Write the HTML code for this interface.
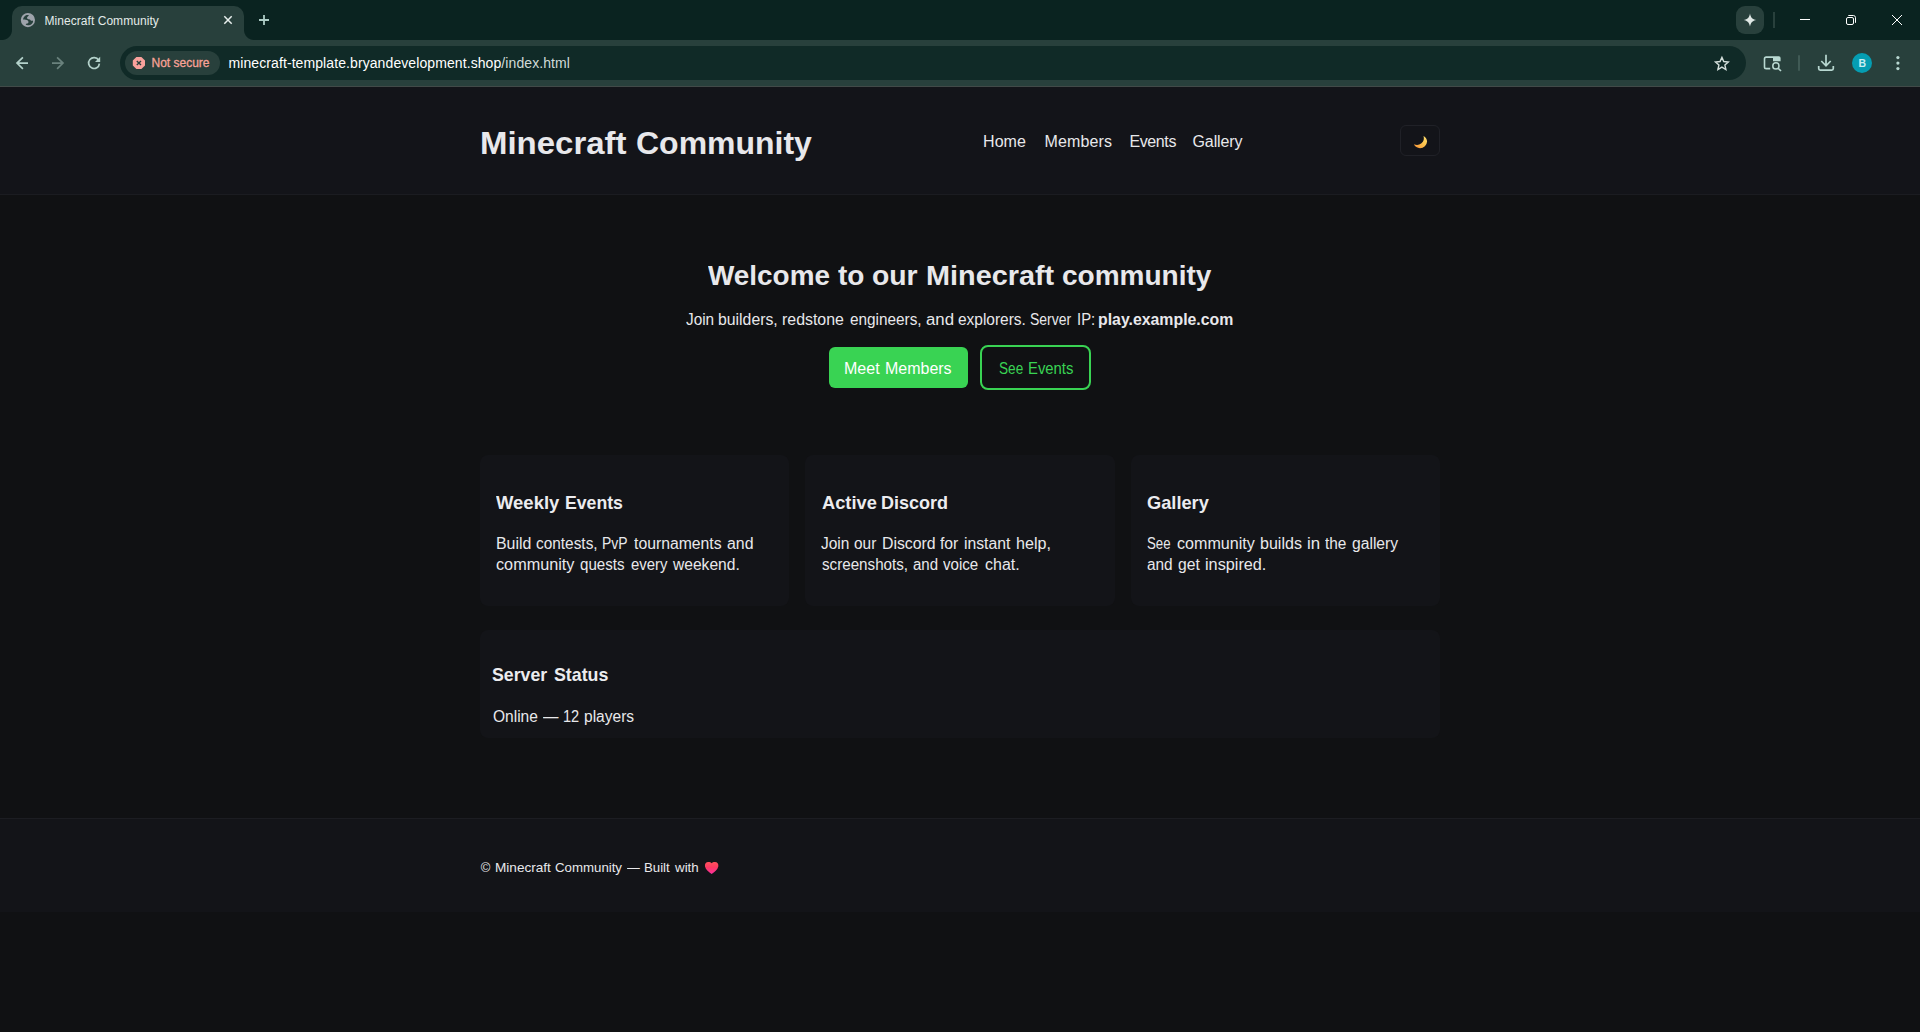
<!DOCTYPE html>
<html lang="en">
<head>
<meta charset="utf-8">
<title>Minecraft Community</title>
<style>
html,body{margin:0;padding:0}
body{width:1920px;height:1032px;overflow:hidden;position:relative;background:#101113;
  font-family:"Liberation Sans",sans-serif;color:#e8e8eb;-webkit-font-smoothing:antialiased}
.abs{position:absolute}
.t{position:absolute;white-space:pre;line-height:1;margin:0;padding:0}
/* ---------- browser chrome ---------- */
#tabstrip{left:0;top:0;width:1920px;height:40px;background:#0a2320}
#toolbar{left:0;top:40px;width:1920px;height:46px;background:#28403c}
#tbline{left:0;top:86px;width:1920px;height:1px;background:#414a48}
#tab{left:12px;top:6px;width:232px;height:34px;background:#28403c;border-radius:10px 10px 0 0}
#tabL{left:2px;top:30px;width:10px;height:10px;background:radial-gradient(circle at 0 0,rgba(40,64,60,0) 9.5px,#28403c 10.5px)}
#tabR{left:244px;top:30px;width:10px;height:10px;background:radial-gradient(circle at 100% 0,rgba(40,64,60,0) 9.5px,#28403c 10.5px)}
#omni{left:120px;top:46px;width:1626px;height:34px;border-radius:17px;background:#102a27}
#chip{left:125px;top:51px;width:95px;height:24px;border-radius:12px;background:#28403c}
#spark{left:1736px;top:6px;width:28px;height:28px;border-radius:9px;background:#28403c}
.sep{width:1px;background:#3b5450}
#avatar{left:1852px;top:53px;width:20px;height:20px;border-radius:50%;background:#059db2}
svg{position:absolute;overflow:visible}
/* ---------- page ---------- */
#hdr{left:0;top:87px;width:1920px;height:107px;background:#131419}
#hdrline{left:0;top:194px;width:1920px;height:1px;background:#1b1c21}
.card{position:absolute;background:#131418;border-radius:8px}
#footer{left:0;top:818px;width:1920px;height:94px;background:#131418;border-top:1px solid #1c1d22;box-sizing:border-box}
#toggle{display:block;left:1400px;top:125px;width:40px;height:31px;box-sizing:border-box;border:1px solid #202127;border-radius:6px}
#btn1{display:block;left:829px;top:347px;width:139px;height:41px;border-radius:6px;background:#39d353}
#btn2{display:block;left:980px;top:345px;width:111px;height:45px;border-radius:8px;border:2px solid #39d353;box-sizing:border-box}
h1,h2,h3,p,strong,a,button{margin:0;padding:0;font:inherit;color:inherit;text-decoration:none;background:none}
.ln{position:absolute;left:0;margin:0;padding:0;line-height:1;white-space:pre;height:0}
.ln span{position:absolute;top:0;transform-origin:0 50%;display:block}
.h3{font-size:18.72px;font-weight:700;color:#ececef}
.p{font-size:16px;color:#e6e6e9}
</style>
</head>
<body>
<!-- ================= browser chrome ================= -->
<div class="abs" id="tabstrip"></div>
<div class="abs" id="toolbar"></div>
<div class="abs" id="tbline"></div>
<div class="abs" id="tab"></div>
<div class="abs" id="tabL"></div>
<div class="abs" id="tabR"></div>
<div class="abs" id="omni"></div>
<div class="abs" id="chip"></div>
<div class="abs" id="spark"></div>
<div class="abs sep" style="left:1773px;top:12px;width:2px;height:16px;background:#28403c"></div>
<div class="abs sep" style="left:1798px;top:55px;width:2px;height:16px;background:#405a55;border-radius:1px"></div>
<div class="abs" id="avatar"></div>

<span class="t" id="tabtitle" style="left:44.5px;top:15px;font-size:12px;letter-spacing:.05px;color:#e3ebe9">Minecraft Community</span>
<span class="t" id="notsecure" style="left:151.5px;top:57px;font-size:12px;letter-spacing:0;color:#f8a296;-webkit-text-stroke:.3px #f8a296">Not secure</span>
<span class="t" id="url" style="left:228.5px;top:56.3px;font-size:14px;letter-spacing:.09px;color:#ffffff">minecraft-template.bryandevelopment.shop<span style="color:#d0dbd8">/index.html</span></span>
<span class="t" id="avB" style="left:1858.6px;top:58px;font-size:10.5px;font-weight:700;color:#c9eef2">B</span>

<!-- ================= page ================= -->
<header class="abs" id="hdr"></header>
<div class="abs" id="hdrline"></div>
<a class="t" id="nav1" style="left:983px;top:133.5px;font-size:16px;letter-spacing:.08px">Home</a>
<a class="t" id="nav2" style="left:1044.5px;top:133.5px;font-size:16px;letter-spacing:.12px">Members</a>
<a class="t" id="nav3" style="left:1129.5px;top:133.5px;font-size:16px;letter-spacing:-.4px">Events</a>
<a class="t" id="nav4" style="left:1192.5px;top:133.5px;font-size:16px;letter-spacing:-.1px">Gallery</a>
<button class="abs" id="toggle" aria-label="Toggle theme"></button>

<a class="abs" id="btn1"></a>
<a class="abs" id="btn2"></a>

<article class="card" id="c1" style="left:480px;top:454.5px;width:309.33px;height:151px"></article>
<article class="card" id="c2" style="left:805.33px;top:454.5px;width:309.33px;height:151px"></article>
<article class="card" id="c3" style="left:1130.67px;top:454.5px;width:309.33px;height:151px"></article>
<article class="card" id="c4" style="left:480px;top:630px;width:960px;height:108px"></article>





<footer class="abs" id="footer"></footer>

<!-- ================= page text (word-level positioned) ================= -->
<h1 class="ln" id="brand" style="top:126.6px;font-size:32px;font-weight:700;">
<span style="left:479.74px;transform:scaleX(1.0299)">Minecraft </span><span style="left:635.50px;transform:scaleX(0.9994)">Community</span>
</h1>
<h2 class="ln" id="h2" style="top:262px;font-size:28px;font-weight:700;">
<span style="left:708.10px;transform:scaleX(0.9963)">Welcome </span><span style="left:837.60px;transform:scaleX(0.9991)">to </span><span style="left:872.29px;transform:scaleX(1.0112)">our </span><span style="left:926.47px;transform:scaleX(1.0297)">Minecraft </span><span style="left:1061.90px;transform:scaleX(1.0001)">community</span>
</h2>
<p class="ln" id="lead" style="top:312px;font-size:16px;font-weight:400;">
<span style="left:686.25px;transform:scaleX(0.9577)">Join </span><span style="left:718.11px;transform:scaleX(0.9876)">builders, </span><span style="left:782.11px;transform:scaleX(0.9940)">redstone </span><span style="left:849.50px;transform:scaleX(0.9586)">engineers, </span><span style="left:925.90px;transform:scaleX(1.0505)">and </span><span style="left:957.70px;transform:scaleX(0.9665)">explorers. </span><span style="left:1029.90px;transform:scaleX(0.8745)">Server </span><span style="left:1077.37px;transform:scaleX(0.9289)">IP:</span>
</p>
<strong class="ln" id="leadb" style="top:312px;font-size:16px;font-weight:700;">
<span style="left:1098.21px;transform:scaleX(0.9902)">play.example.com</span>
</strong>
<a class="ln" id="b1t" style="top:360.8px;font-size:16px;font-weight:400;color:#ffffff">
<span style="left:844.30px;transform:scaleX(1.0021)">Meet </span><span style="left:885.40px;transform:scaleX(0.9988)">Members</span>
</a>
<a class="ln" id="b2t" style="top:360.8px;font-size:16px;font-weight:400;color:#39d353">
<span style="left:998.70px;transform:scaleX(0.8505)">See </span><span style="left:1027.87px;transform:scaleX(0.9287)">Events</span>
</a>
<h3 class="ln" id="c1h" style="top:494px;font-size:18.72px;font-weight:700;color:#ececef">
<span style="left:496.10px;transform:scaleX(0.9874)">Weekly </span><span style="left:565.26px;transform:scaleX(0.9444)">Events</span>
</h3>
<h3 class="ln" id="c2h" style="top:494px;font-size:18.72px;font-weight:700;color:#ececef">
<span style="left:821.60px;transform:scaleX(0.9760)">Active </span><span style="left:881.24px;transform:scaleX(0.9617)">Discord</span>
</h3>
<h3 class="ln" id="c3h" style="top:494px;font-size:18.72px;font-weight:700;color:#ececef">
<span style="left:1146.90px;transform:scaleX(0.9747)">Gallery</span>
</h3>
<h3 class="ln" id="c4h" style="top:666px;font-size:18.72px;font-weight:700;color:#ececef">
<span style="left:492.40px;transform:scaleX(0.9464)">Server </span><span style="left:553.80px;transform:scaleX(0.9514)">Status</span>
</h3>
<p class="ln" id="c1a" style="top:536px;font-size:16px;font-weight:400;">
<span style="left:495.61px;transform:scaleX(0.9947)">Build </span><span style="left:536.40px;transform:scaleX(0.9625)">contests, </span><span style="left:602.13px;transform:scaleX(0.8709)">PvP </span><span style="left:633.60px;transform:scaleX(0.9850)">tournaments </span><span style="left:727.00px;transform:scaleX(0.9924)">and</span>
</p>
<p class="ln" id="c1b" style="top:557px;font-size:16px;font-weight:400;">
<span style="left:496.20px;transform:scaleX(1.0136)">community </span><span style="left:580.40px;transform:scaleX(0.9440)">quests </span><span style="left:630.70px;transform:scaleX(0.9329)">every </span><span style="left:673.27px;transform:scaleX(0.9743)">weekend.</span>
</p>
<p class="ln" id="c2a" style="top:536px;font-size:16px;font-weight:400;">
<span style="left:821.30px;transform:scaleX(0.9665)">Join </span><span style="left:854.10px;transform:scaleX(0.9623)">our </span><span style="left:881.81px;transform:scaleX(0.9898)">Discord </span><span style="left:940.40px;transform:scaleX(0.9822)">for </span><span style="left:964.22px;transform:scaleX(0.9830)">instant </span><span style="left:1016.00px;transform:scaleX(1.0045)">help,</span>
</p>
<p class="ln" id="c2b" style="top:557px;font-size:16px;font-weight:400;">
<span style="left:821.60px;transform:scaleX(0.9483)">screenshots, </span><span style="left:913.00px;transform:scaleX(0.9381)">and </span><span style="left:943.00px;transform:scaleX(0.9425)">voice </span><span style="left:984.50px;transform:scaleX(0.9987)">chat.</span>
</p>
<p class="ln" id="c3a" style="top:536px;font-size:16px;font-weight:400;">
<span style="left:1147.00px;transform:scaleX(0.8260)">See </span><span style="left:1176.75px;transform:scaleX(1.0052)">community </span><span style="left:1260.00px;transform:scaleX(1.0023)">builds </span><span style="left:1306.95px;transform:scaleX(1.0517)">in </span><span style="left:1324.90px;transform:scaleX(0.9622)">the </span><span style="left:1352.20px;transform:scaleX(0.9781)">gallery</span>
</p>
<p class="ln" id="c3b" style="top:557px;font-size:16px;font-weight:400;">
<span style="left:1147.30px;transform:scaleX(0.9614)">and </span><span style="left:1178.20px;transform:scaleX(0.9782)">get </span><span style="left:1204.89px;transform:scaleX(1.0150)">inspired.</span>
</p>
<p class="ln" id="c4a" style="top:709px;font-size:16px;font-weight:400;">
<span style="left:492.50px;transform:scaleX(0.9708)">Online </span><span style="left:543.10px;transform:scaleX(0.9625)">— </span><span style="left:563.39px;transform:scaleX(0.9113)">12 </span><span style="left:584.33px;transform:scaleX(0.9708)">players</span>
</p>
<p class="ln" id="foot" style="top:861.3px;font-size:13px;font-weight:400;">
<span style="left:480.80px;transform:scaleX(1.0000)">© </span><span style="left:494.96px;transform:scaleX(1.0445)">Minecraft </span><span style="left:555.30px;transform:scaleX(1.0191)">Community </span><span style="left:627.20px;transform:scaleX(0.9846)">— </span><span style="left:644.18px;transform:scaleX(1.0171)">Built </span><span style="left:674.73px;transform:scaleX(1.0256)">with</span>
</p>

<!-- ================= icons (single overlay svg in page coordinates) ================= -->
<svg id="icons" width="1920" height="1032" viewBox="0 0 1920 1032" style="left:0;top:0" fill="none" stroke-linecap="butt">
  <defs>
    <clipPath id="globeclip"><circle cx="27.9" cy="20.05" r="5.9"/></clipPath>
    <linearGradient id="moong" x1="1426" y1="136" x2="1415" y2="148" gradientUnits="userSpaceOnUse">
      <stop offset="0" stop-color="#ffe06e"/><stop offset=".5" stop-color="#fcc04a"/><stop offset="1" stop-color="#f7943a"/>
    </linearGradient>
    <linearGradient id="heartg" x1="0" y1="862" x2="0" y2="874" gradientUnits="userSpaceOnUse">
      <stop offset="0" stop-color="#ff525c"/><stop offset=".45" stop-color="#fb3a62"/><stop offset="1" stop-color="#fb2f9f"/>
    </linearGradient>
  </defs>
  <!-- favicon globe -->
  <circle cx="27.9" cy="20.05" r="7.1" fill="#9ea3ab"/>
  <g transform="translate(20.8 12.95)" clip-path="none">
    <path d="M2.2 6.6 C2.6 4.6 3.6 3.2 5.2 2.4 C6.2 1.9 7.3 1.8 8.2 2.3 C7.6 3.1 6.4 3.8 6.2 4.9 C6.3 5.7 6.8 6.1 7.6 6.3 C8.6 6.4 9.4 6.5 9.8 7.2 C10.2 8.1 11 7.9 11.9 7.5 L12.3 8.3 C12.1 9.6 11.6 10.5 10.6 11.2 C9.8 11.9 8.9 12.2 7.8 12.3 C6.8 12.4 5.8 12.3 5.1 11.9 C4.9 11.4 5 11 5.4 10.7 C6.1 10.5 6.8 10.6 7.2 10.2 C7.7 9.7 7.9 9.2 7.6 8.6 C7.3 7.8 6.8 7.3 6.1 7.1 C5.2 6.8 4.4 6.6 3.8 6.6 Z" fill="#28403c"/>
  </g>
  <!-- tab close -->
  <path d="M224.3 16.3 L231.7 23.7 M231.7 16.3 L224.3 23.7" stroke="#e8efed" stroke-width="1.5"/>
  <!-- new tab plus -->
  <path d="M259 20 H269 M264 15 V25" stroke="#aecdc6" stroke-width="1.8"/>
  <!-- back -->
  <path d="M28 63.1 H17.2 M22.9 57.3 L17 63.1 L22.9 68.9" stroke="#b4d2cb" stroke-width="1.7" stroke-linejoin="miter"/>
  <!-- forward (disabled) -->
  <path d="M52 63.1 H62.8 M57.1 57.3 L63 63.1 L57.1 68.9" stroke="#6a827d" stroke-width="1.7" stroke-linejoin="miter"/>
  <!-- reload -->
  <path d="M98.6 60.2 A5.4 5.4 0 1 0 99.4 63.6" stroke="#b4d2cb" stroke-width="1.7"/>
  <path d="M100.2 56.8 V62 H95 Z" fill="#b4d2cb"/>
  <!-- not secure icon -->
  <path d="M136.4 57 H141.4 L145 60.5 V65.5 L141.4 69 H136.4 L132.8 65.5 V60.5 Z" fill="#f9a19c"/>
  <path d="M136.8 60.9 L141 65.1 M141 60.9 L136.8 65.1" stroke="#28403c" stroke-width="1.35" stroke-linecap="butt"/>
  <!-- bookmark star -->
  <path d="M1721.9 57.4 L1723.75 61.55 L1728.3 62 L1724.9 65.05 L1725.9 69.5 L1721.9 67.15 L1717.9 69.5 L1718.9 65.05 L1715.5 62 L1720.05 61.55 Z" stroke="#d3dedb" stroke-width="1.4" stroke-linejoin="miter"/>
  <!-- lens / tab search icon -->
  <path d="M1770.2 68.6 H1766.2 Q1764.5 68.6 1764.5 66.9 V58.8 Q1764.5 57.1 1766.2 57.1 H1773" stroke="#b9d9d2" stroke-width="1.6"/>
  <path d="M1773 56.3 H1778.8 Q1780.6 56.3 1780.6 58.1 V61.2 H1773 Z" fill="#b9d9d2"/>
  <circle cx="1775.9" cy="65.9" r="3.1" stroke="#b9d9d2" stroke-width="1.5"/>
  <path d="M1778.2 68.2 L1781 71" stroke="#b9d9d2" stroke-width="1.6"/>
  <!-- download -->
  <path d="M1826 54.8 V65.6 M1821.3 61 L1826 65.8 L1830.7 61" stroke="#b8d8d1" stroke-width="1.7"/>
  <path d="M1818.7 66 V68.6 Q1818.7 70.1 1820.2 70.1 H1831.8 Q1833.3 70.1 1833.3 68.6 V66" stroke="#b8d8d1" stroke-width="1.7"/>
  <!-- menu dots -->
  <circle cx="1897.9" cy="57.6" r="1.6" fill="#b8d8d1"/><circle cx="1897.9" cy="63.1" r="1.6" fill="#b8d8d1"/><circle cx="1897.9" cy="68.6" r="1.6" fill="#b8d8d1"/>
  <!-- sparkle -->
  <path d="M1750 13.4 C1750.7 17.4 1752.4 19.2 1756.4 20 C1752.4 20.8 1750.7 22.6 1750 26.6 C1749.3 22.6 1747.6 20.8 1743.6 20 C1747.6 19.2 1749.3 17.4 1750 13.4 Z" fill="#e0e8e6"/>
  <!-- window controls -->
  <rect x="1800" y="19" width="10" height="1" fill="#ffffff"/>
  <rect x="1846.5" y="17.5" width="7" height="7" rx="1.5" stroke="#ffffff" stroke-width="1"/>
  <path d="M1848.3 15.5 H1853.3 Q1855.5 15.5 1855.5 17.7 V22.8" stroke="#ffffff" stroke-width="1"/>
  <path d="M1892 15 L1902 25 M1902 15 L1892 25" stroke="#ffffff" stroke-width="1"/>
  <!-- moon (theme toggle) -->
  <path aria-label="moon" d="M1423.5 136 A7.1 7.1 0 0 1 1427.1 141.6 A7.1 7.1 0 0 1 1420 148.2 A7.1 7.1 0 0 1 1413.9 144.3 A6.9 6.9 0 0 0 1423.5 136 Z" fill="url(#moong)"/>
  <!-- heart -->
  <path aria-label="heart" d="M711.65 874.1 C709 872 705.6 869.7 705 866.6 C704.5 864 706 862 708.3 862 C709.8 862 711 862.4 711.65 863.2 C712.3 862.4 713.5 862 715 862 C717.3 862 718.8 864 718.3 866.6 C717.7 869.7 714.3 872 711.65 874.1 Z" fill="url(#heartg)"/>
</svg>
</body>
</html>
